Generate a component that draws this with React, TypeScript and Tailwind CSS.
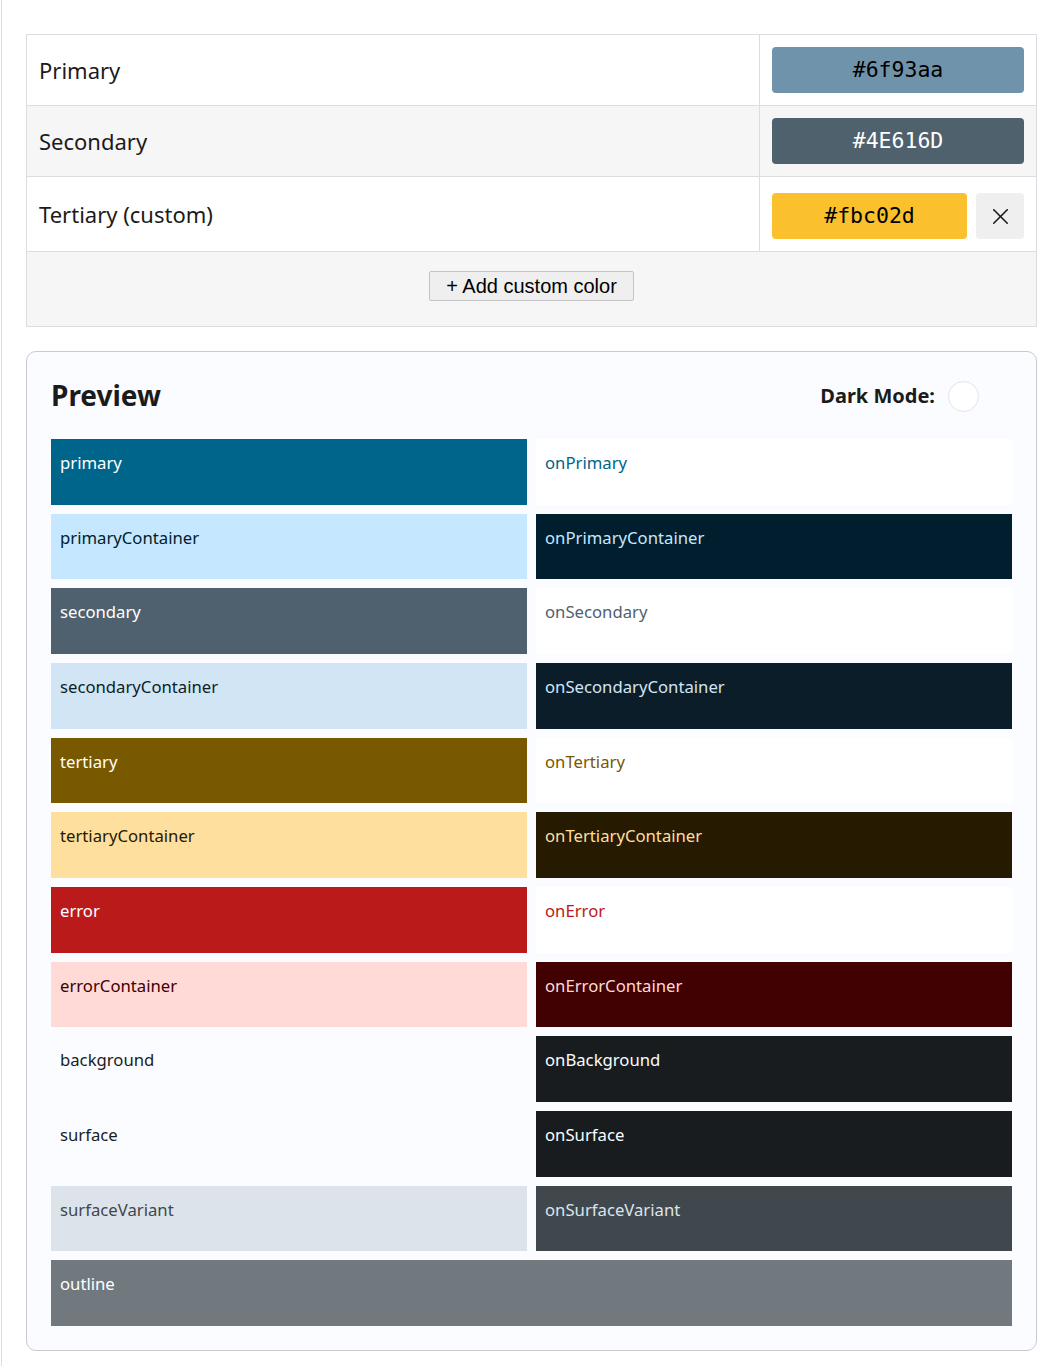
import React, { useState } from 'react';
import { X } from 'lucide-react';

type Swatch = { name: string; bg: string; fg: string; wide?: boolean };

// light scheme generated from the seed colors
const swatches: Swatch[] = [
  { name: 'primary', bg: 'bg-[#00658b]', fg: 'text-white' },
  { name: 'onPrimary', bg: 'bg-white', fg: 'text-[#00658b]' },
  { name: 'primaryContainer', bg: 'bg-[#c5e7ff]', fg: 'text-[#001e2d]' },
  { name: 'onPrimaryContainer', bg: 'bg-[#001e2d]', fg: 'text-[#c5e7ff]' },
  { name: 'secondary', bg: 'bg-[#4f616e]', fg: 'text-white' },
  { name: 'onSecondary', bg: 'bg-white', fg: 'text-[#4f616e]' },
  { name: 'secondaryContainer', bg: 'bg-[#d2e5f5]', fg: 'text-[#0b1d29]' },
  { name: 'onSecondaryContainer', bg: 'bg-[#0b1d29]', fg: 'text-[#d2e5f5]' },
  { name: 'tertiary', bg: 'bg-[#785900]', fg: 'text-white' },
  { name: 'onTertiary', bg: 'bg-white', fg: 'text-[#785900]' },
  { name: 'tertiaryContainer', bg: 'bg-[#ffdf9e]', fg: 'text-[#261a00]' },
  { name: 'onTertiaryContainer', bg: 'bg-[#261a00]', fg: 'text-[#ffdf9e]' },
  { name: 'error', bg: 'bg-[#ba1a1a]', fg: 'text-white' },
  { name: 'onError', bg: 'bg-white', fg: 'text-[#ba1a1a]' },
  { name: 'errorContainer', bg: 'bg-[#ffdad6]', fg: 'text-[#410002]' },
  { name: 'onErrorContainer', bg: 'bg-[#410002]', fg: 'text-[#ffdad6]' },
  { name: 'background', bg: 'bg-[#fafcff]', fg: 'text-[#191c1e]' },
  { name: 'onBackground', bg: 'bg-[#191c1e]', fg: 'text-[#fafcff]' },
  { name: 'surface', bg: 'bg-[#fafcff]', fg: 'text-[#191c1e]' },
  { name: 'onSurface', bg: 'bg-[#191c1e]', fg: 'text-[#fafcff]' },
  { name: 'surfaceVariant', bg: 'bg-[#dde3ea]', fg: 'text-[#41484d]' },
  { name: 'onSurfaceVariant', bg: 'bg-[#41484d]', fg: 'text-[#dde3ea]' },
  { name: 'outline', bg: 'bg-[#71787e]', fg: 'text-white', wide: true },
];

function HexButton({ hex, className }: { hex: string; className: string }) {
  return (
    <button
      className={`h-[46px] rounded-[4px] flex items-center justify-center text-[21.5px] ${className}`}
      style={{ fontFamily: '"DejaVu Sans Mono", "Liberation Mono", monospace' }}
    >
      {hex}
    </button>
  );
}

export default function App() {
  const [dark, setDark] = useState(false);

  return (
    <div
      className="min-h-screen bg-white ml-px border-l border-[#dcdcdc] pl-6 pr-[19px] pt-[34px] pb-4 text-[#1b1b1b]"
      style={{ fontFamily: '"Noto Sans", "Open Sans", sans-serif' }}
    >
      {/* Seed colors */}
      <div className="border border-[#dcdde2]">
        <div className="flex bg-white border-b border-[#dcdde2]">
          <div className="flex-1 flex items-center px-3 text-[22px]">Primary</div>
          <div className="w-[277px] border-l border-[#dcdde2] p-3">
            <HexButton hex="#6f93aa" className="w-full bg-[#6f93aa] text-black" />
          </div>
        </div>
        <div className="flex bg-[#f6f6f6] border-b border-[#dcdde2]">
          <div className="flex-1 flex items-center px-3 text-[22px]">Secondary</div>
          <div className="w-[277px] border-l border-[#dcdde2] p-3">
            <HexButton hex="#4E616D" className="w-full bg-[#4e616d] text-white" />
          </div>
        </div>
        <div className="flex bg-white border-b border-[#dcdde2]">
          <div className="flex-1 flex items-center px-3 text-[22px]">Tertiary (custom)</div>
          <div className="w-[277px] border-l border-[#dcdde2] px-3 pt-4 pb-3 flex gap-[9px]">
            <HexButton hex="#fbc02d" className="flex-1 bg-[#fbc02d] text-black" />
            <button className="w-12 h-[46px] rounded-[4px] bg-[#efefef] flex items-center justify-center text-[#1b1b1b]">
              <X className="w-[27px] h-[27px]" strokeWidth={1.4} />
            </button>
          </div>
        </div>
        <div className="bg-[#f6f6f6] h-[74px] pt-[19px] flex justify-center">
          <button
            className="h-[30px] px-4 rounded-[2px] border border-[#c4c4c4] bg-[#efefef] text-[20px] leading-none text-black"
            style={{ fontFamily: '"Liberation Sans", Arial, sans-serif' }}
          >
            + Add custom color
          </button>
        </div>
      </div>

      {/* Preview */}
      <div className="mt-6 border border-[#c9cacf] rounded-[10px] bg-[#fafcff] p-6">
        <div className="flex items-center justify-between h-[40px] mb-[23px]">
          <h2 className="text-[28px] font-bold text-[#1b1b1b] leading-none -mt-[2px]">Preview</h2>
          <div className="flex items-center gap-[13px] pr-[33px]">
            <span className="text-[20px] font-bold text-[#1b1b1b]">Dark Mode:</span>
            <button
              onClick={() => setDark(!dark)}
              className="w-[31px] h-[31px] rounded-full bg-white border border-[#e4e4e4]"
            />
          </div>
        </div>

        <div className="grid grid-cols-2 gap-[9px]">
          {swatches.map((s) => (
            <div
              key={s.name}
              className={`h-[65.67px] px-[9px] pt-[11px] text-[16.7px] ${s.bg} ${s.fg} ${s.wide ? 'col-span-2' : ''}`}
            >
              {s.name}
            </div>
          ))}
        </div>
      </div>
    </div>
  );
}
